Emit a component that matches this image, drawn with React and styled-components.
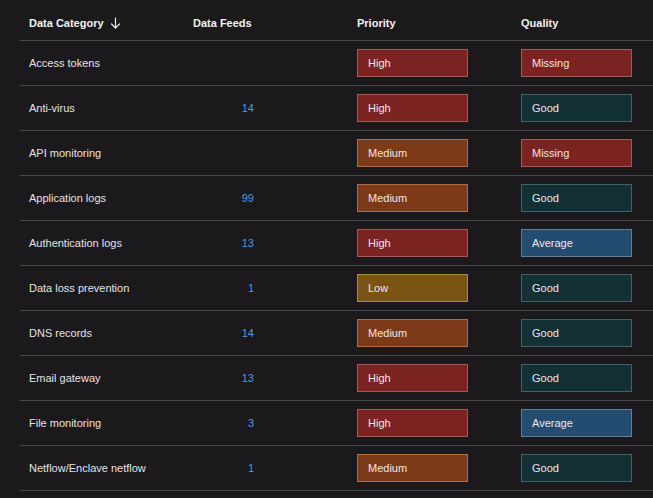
import React from "react";
import styled, { createGlobalStyle } from "styled-components";

const GlobalStyle = createGlobalStyle`
  html, body {
    margin: 0;
    padding: 0;
    background: #1b191c;
  }
  body {
    font-family: "Liberation Sans", Arial, sans-serif;
    -webkit-font-smoothing: antialiased;
  }
`;

const tones = {
  High: { bg: "#7a2321", border: "#a25a55" },
  Missing: { bg: "#7a2321", border: "#a25a55" },
  Medium: { bg: "#7d3a18", border: "#b06c45" },
  Low: { bg: "#7a5412", border: "#a88a45" },
  Good: { bg: "#133035", border: "#3e6467" },
  Average: { bg: "#234c70", border: "#5d7f9c" },
};

const rows = [
  { name: "Access tokens", feeds: null, priority: "High", quality: "Missing" },
  { name: "Anti-virus", feeds: 14, priority: "High", quality: "Good" },
  { name: "API monitoring", feeds: null, priority: "Medium", quality: "Missing" },
  { name: "Application logs", feeds: 99, priority: "Medium", quality: "Good" },
  { name: "Authentication logs", feeds: 13, priority: "High", quality: "Average" },
  { name: "Data loss prevention", feeds: 1, priority: "Low", quality: "Good" },
  { name: "DNS records", feeds: 14, priority: "Medium", quality: "Good" },
  { name: "Email gateway", feeds: 13, priority: "High", quality: "Good" },
  { name: "File monitoring", feeds: 3, priority: "High", quality: "Average" },
  { name: "Netflow/Enclave netflow", feeds: 1, priority: "Medium", quality: "Good" },
];

const Page = styled.div`
  width: 653px;
  height: 498px;
  padding-left: 20px;
  box-sizing: border-box;
  overflow: hidden;
  background: #1b191c;
`;

const Row = styled.div`
  display: grid;
  grid-template-columns: 173px 164px 164px 1fr;
  align-items: center;
  box-sizing: border-box;
  height: ${(p) => (p.$header ? "41px" : "45px")};
  padding-top: ${(p) => (p.$header ? "5px" : "0")};
  border-bottom: 1px solid #4a494c;
`;

const HeadCell = styled.div`
  display: flex;
  align-items: center;
  gap: 6px;
  color: #f2f2f2;
  font-size: 11px;
  font-weight: 600;
  padding-left: ${(p) => (p.$first ? "9px" : "0")};
`;

const NameCell = styled.div`
  color: #e4e4e4;
  font-size: 11px;
  padding-left: 9px;
`;

const Count = styled.div`
  width: 61px;
  text-align: right;
  color: #4b9be0;
  font-size: 11px;
`;

const Badge = styled.div`
  width: 111px;
  height: 28px;
  box-sizing: border-box;
  display: flex;
  align-items: center;
  padding-left: 10px;
  font-size: 11px;
  color: #f1e6e4;
  background: ${(p) => tones[p.$tone].bg};
  border: 1px solid ${(p) => tones[p.$tone].border};
`;

const SortArrow = () => (
  <svg width="11" height="12" viewBox="0 0 11 12" fill="none" stroke="#e6e6e6" strokeWidth="1.2" strokeLinecap="round" strokeLinejoin="round">
    <path d="M5.5 1v10" />
    <path d="M1.5 7l4 4 4-4" />
  </svg>
);

export default function App() {
  return (
    <Page>
      <GlobalStyle />
      <Row $header>
        <HeadCell $first>
          Data Category <SortArrow />
        </HeadCell>
        <HeadCell>Data Feeds</HeadCell>
        <HeadCell>Priority</HeadCell>
        <HeadCell>Quality</HeadCell>
      </Row>
      {rows.map((r) => (
        <Row key={r.name}>
          <NameCell>{r.name}</NameCell>
          <Count>{r.feeds}</Count>
          <Badge $tone={r.priority}>{r.priority}</Badge>
          <Badge $tone={r.quality}>{r.quality}</Badge>
        </Row>
      ))}
    </Page>
  );
}
